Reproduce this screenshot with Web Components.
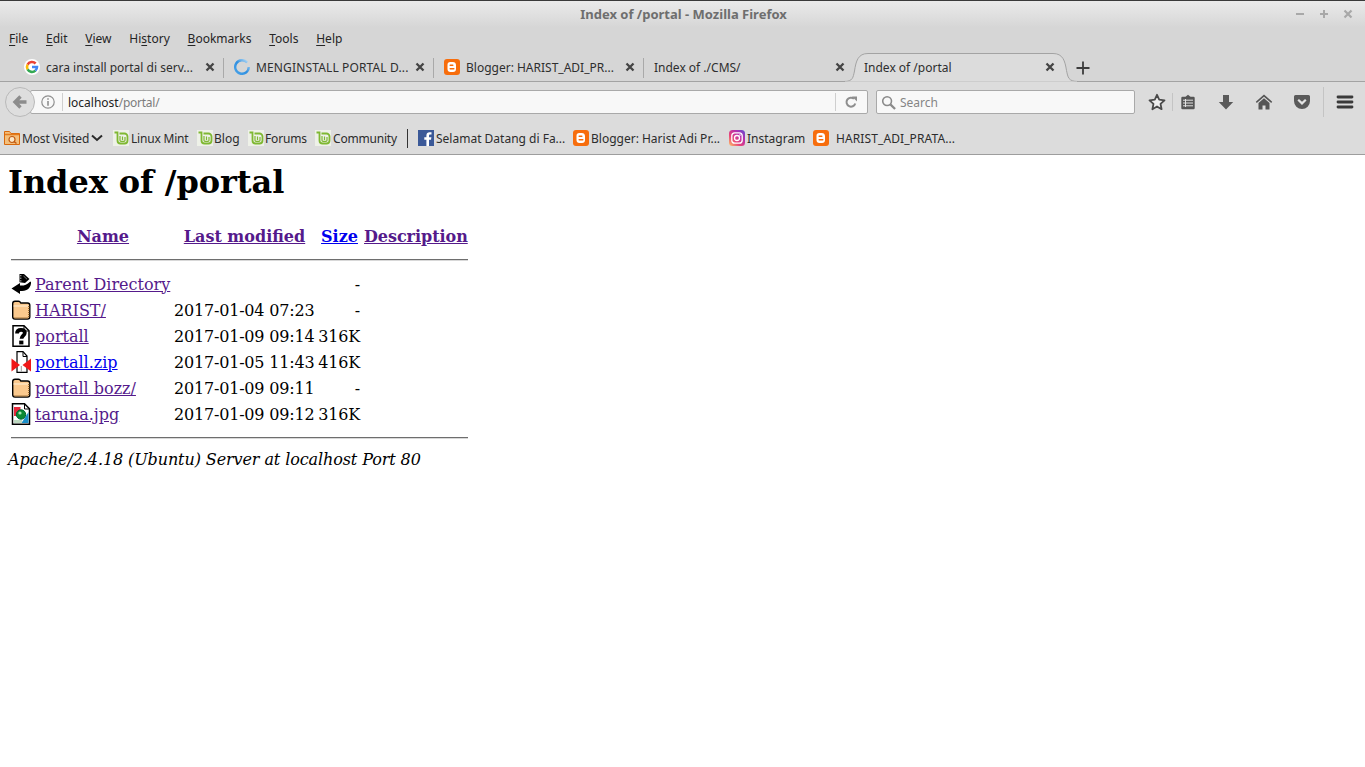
<!DOCTYPE html>
<html lang="en">
<head>
<meta charset="utf-8">
<title>Index of /portal - Mozilla Firefox</title>
<style>
html, body { margin: 0; height: 100%; overflow: hidden; background: #fff; }
</style>
</head>
<body>
<fx-window>
  <fx-titlebar slot="chrome">Index of /portal - Mozilla Firefox</fx-titlebar>
  <fx-menubar slot="chrome"></fx-menubar>
  <fx-tabstrip slot="chrome">
    <fx-tab icon="google">cara install portal di serv...</fx-tab>
    <fx-tab icon="spinner" style="letter-spacing:.14px">MENGINSTALL PORTAL D...</fx-tab>
    <fx-tab icon="blogger">Blogger: HARIST_ADI_PR...</fx-tab>
    <fx-tab>Index of ./CMS/</fx-tab>
    <fx-tab active>Index of /portal</fx-tab>
  </fx-tabstrip>
  <fx-navbar slot="chrome"></fx-navbar>
  <fx-bookmarks slot="chrome">
    <fx-bookmark icon="mostvisited" chevron style="--w:109px;--gap:2px;letter-spacing:-.15px">Most Visited</fx-bookmark>
    <fx-bookmark icon="mint" style="--w:84px;--gap:2px;letter-spacing:-.2px">Linux Mint</fx-bookmark>
    <fx-bookmark icon="mint" style="--w:51px;--gap:1px">Blog</fx-bookmark>
    <fx-bookmark icon="mint" style="--w:67px;--gap:1px;letter-spacing:-.15px">Forums</fx-bookmark>
    <fx-bookmark icon="mint" style="--w:92px;--gap:2px;letter-spacing:-.2px">Community</fx-bookmark>
    <fx-bookmark separator style="--w:11px"></fx-bookmark>
    <fx-bookmark icon="facebook" style="--w:155px;--gap:2px">Selamat Datang di Fa...</fx-bookmark>
    <fx-bookmark icon="blogger" style="--w:156px;--gap:2px">Blogger: Harist Adi Pr...</fx-bookmark>
    <fx-bookmark icon="instagram" style="--w:84px;--gap:2px">Instagram</fx-bookmark>
    <fx-bookmark icon="blogger" style="--gap:7px;letter-spacing:.1px">HARIST_ADI_PRATA...</fx-bookmark>
  </fx-bookmarks>

  <dir-listing path="/portal" footer="Apache/2.4.18 (Ubuntu) Server at localhost Port 80">
    <dir-row icon="back" name="Parent Directory" size="-" visited></dir-row>
    <dir-row icon="folder" name="HARIST/" date="2017-01-04 07:23" size="-" visited></dir-row>
    <dir-row icon="unknown" name="portall" date="2017-01-09 09:14" size="316K" visited></dir-row>
    <dir-row icon="compressed" name="portall.zip" date="2017-01-05 11:43" size="416K"></dir-row>
    <dir-row icon="folder" name="portall bozz/" date="2017-01-09 09:11" size="-" visited></dir-row>
    <dir-row icon="image" name="taruna.jpg" date="2017-01-09 09:12" size="316K" visited></dir-row>
  </dir-listing>
</fx-window>

<script>
const UI_FONT = `"Noto Sans", "Open Sans", sans-serif`;

// all the small pictures live here, keyed by name
const ICONS = {
  google: `<svg viewBox="0 0 16 16"><circle cx="8" cy="8" r="8" fill="#fff"/><g fill="none" stroke-width="2.6">
    <path d="M3.6 5.6A5 5 0 0 1 11.6 4.5" stroke="#ea4335"/><path d="M3.6 5.6A5 5 0 0 0 3.6 10.4" stroke="#fbbc05"/>
    <path d="M3.6 10.4A5 5 0 0 0 11.4 11.6" stroke="#34a853"/><path d="M11.4 11.6A5 5 0 0 0 13 8H8" stroke="#4285f4"/></g></svg>`,
  spinner: `<svg viewBox="0 0 16 16"><defs><linearGradient id="s" x1="1" y1="0" x2="0" y2="1"><stop offset="0" stop-color="#bfe0f7"/><stop offset=".5" stop-color="#2f8fe0"/><stop offset="1" stop-color="#4aa3e8"/></linearGradient></defs>
    <path d="M13.2 3.6A6.8 6.8 0 1 0 14.8 8" fill="none" stroke="url(#s)" stroke-width="2.4"/></svg>`,
  blogger: `<svg viewBox="0 0 16 16"><rect width="16" height="16" rx="3" fill="#f76d0c"/>
    <path d="M6.2 3h2.6A3.2 3.2 0 0 1 12 6v4a3 3 0 0 1-3 3H6.5a3 3 0 0 1-3-3V5.7A2.7 2.7 0 0 1 6.200 3z" fill="#fff"/>
    <path d="M6.200 6.200h2.600M6.200 9.800h3.600" stroke="#f76d0c" stroke-width="1.500" stroke-linecap="round"/></svg>`,
  mint: `<svg viewBox="0 0 16 16"><rect width="16" height="16" fill="#eef1e8"/><g fill="none" stroke="#7fb832" stroke-width="1.800">
    <path d="M1.500 2.500h3v8a3 3 0 0 0 3 3h4a3 3 0 0 0 3-3V6.500a3 3 0 0 0-3-3H6.500"/><path d="M7 6v4.300a1 1 0 0 0 1 1h3a1 1 0 0 0 1-1V7M9.500 6.500v3.500" stroke-width="1.200"/></g></svg>`,
  mostvisited: `<svg viewBox="0 0 16 16"><path d="M.5 1.500h5l1.500 2h8.500v11H.5z" fill="#f3bf7c" stroke="#d9690c"/><path d="M1 4.500h14" stroke="#e57a1a" stroke-width="1.500"/>
    <circle cx="8" cy="9.500" r="3" fill="#fbe7c8" stroke="#c25a12" stroke-width="1.200"/><path d="M10 11.500l2.500 2" stroke="#c25a12" stroke-width="1.500"/></svg>`,
  facebook: `<svg viewBox="0 0 16 16"><rect width="16" height="16" fill="#3b5998"/><path d="M11 16V9.800h2l.4-2.500H11V5.800c0-.8.300-1.200 1.200-1.200h1.300V2.300c-.3 0-1-.1-1.900-.1-1.900 0-3.200 1.100-3.200 3.300v1.800H6.300v2.500h2.100V16z" fill="#fff"/></svg>`,
  instagram: `<svg viewBox="0 0 16 16"><defs><linearGradient id="g" x1="0" y1="1" x2="1" y2="0"><stop offset="0" stop-color="#fdc468"/><stop offset=".35" stop-color="#e8447a"/><stop offset=".7" stop-color="#b22fb0"/><stop offset="1" stop-color="#5b4fd0"/></linearGradient></defs>
    <rect width="16" height="16" rx="3.500" fill="url(#g)"/><rect x="2.800" y="2.800" width="10.400" height="10.400" rx="3" fill="none" stroke="#fff" stroke-width="1.300"/>
    <circle cx="8" cy="8" r="2.500" fill="none" stroke="#fff" stroke-width="1.300"/><circle cx="11" cy="5" r=".8" fill="#fff"/></svg>`,
  close: `<svg viewBox="0 0 12 12"><path d="M2.500 2.500l7 7M9.500 2.500l-7 7" stroke="#444" stroke-width="2.300"/></svg>`,
  plus: `<svg viewBox="0 0 14 14"><path d="M7 .5v13M.5 7h13" stroke="#3c3c3c" stroke-width="1.800"/></svg>`,
  chevron: `<svg viewBox="0 0 12 8"><path d="M1 1.500l5 4.500 5-4.500" fill="none" stroke="#2a2a2a" stroke-width="2"/></svg>`,
  backarrow: `<svg viewBox="0 0 16 16"><path d="M14.500 8H4M8.500 2.500L3 8l5.500 5.500" fill="none" stroke="#8c8c8c" stroke-width="3.400"/></svg>`,
  info: `<svg viewBox="0 0 14 14"><circle cx="7" cy="7" r="6.200" fill="none" stroke="#8f8f8f" stroke-width="1.200"/><path d="M6.200 3.200h1.600v1.500H6.200zM6.200 6h1.600v4.800H6.200z" fill="#8f8f8f"/></svg>`,
  reload: `<svg viewBox="0 0 14 14"><path d="M11.300 8.500A4.500 4.500 0 1 1 10 3.800" fill="none" stroke="#8e8e8e" stroke-width="2"/><path d="M8 1.500h5V6.500z" fill="#8e8e8e"/></svg>`,
  search: `<svg viewBox="0 0 16 16"><circle cx="6.500" cy="6.500" r="4.700" fill="none" stroke="#8a8a8a" stroke-width="1.700"/><path d="M10 10l5 5" stroke="#8a8a8a" stroke-width="2.400"/></svg>`,
  star: `<svg viewBox="0 0 18 18"><path d="M9 1.800l2.200 4.900 5.300.6-4 3.600 1.100 5.300L9 13.500l-4.600 2.700 1.100-5.300-4-3.600 5.300-.6z" fill="#efefef" stroke="#4a4a4a" stroke-width="1.800" stroke-linejoin="round"/></svg>`,
  readinglist: `<svg viewBox="0 0 16 16"><path d="M2.500 2.800H5.500L8 .8l2.500 2h3a1.200 1.200 0 0 1 1.200 1.200v10a1.200 1.200 0 0 1-1.200 1.200h-11A1.200 1.200 0 0 1 1.300 14V4a1.200 1.200 0 0 1 1.200-1.200z" fill="#555"/>
    <path d="M3 6.200h10M3 9h10M3 11.800h10M5.500 5v8" stroke="#e2e2e2" stroke-width="1"/></svg>`,
  download: `<svg viewBox="0 0 16 16"><path d="M5 1h6v7h4.200L8 15.500.8 8H5z" fill="#5a5a5a"/></svg>`,
  home: `<svg viewBox="0 0 18 18"><path d="M9 1.500L.8 8.800l1 1.200L9 3.700l7.200 6.300 1-1.200z" fill="#555"/><path d="M9 5.200L3.500 10v6.500h4v-4h3v4h4V10z" fill="#555"/></svg>`,
  pocket: `<svg viewBox="0 0 18 18"><path d="M2.500 2h13A1.500 1.500 0 0 1 17 3.500V8a8 8 0 0 1-16 0V3.500A1.500 1.500 0 0 1 2.500 2z" fill="#5a5a5a"/><path d="M5.200 6.800L9 10.400l3.800-3.600" fill="none" stroke="#e4e4e4" stroke-width="2.200"/></svg>`,
  menu: `<svg viewBox="0 0 18 14"><path d="M2 2h14M2 7h14M2 12h14" stroke="#3a3a3a" stroke-width="2.800" stroke-linecap="round"/></svg>`,
  winmin: `<svg viewBox="0 0 12 12"><path d="M2 6h8" stroke="#a8a8a8" stroke-width="2"/></svg>`,
  winmax: `<svg viewBox="0 0 12 12"><path d="M6 2v8M2 6h8" stroke="#a8a8a8" stroke-width="2"/></svg>`,
  winclose: `<svg viewBox="0 0 12 12"><path d="M2.500 2.500l7 7M9.500 2.500l-7 7" stroke="#a8a8a8" stroke-width="2.200"/></svg>`,
  back: `<svg viewBox="0 0 20 22"><path d="M8.500 1h4.500l5.500 5-4.500 4-5.500-.8z" fill="#000"/><path d="M9.800 2v1.300M9.800 4.600v1.300M9.800 7.200v1.300" stroke="#ccc"/><path d="M12.500 3l3.500 3.200" stroke="#777"/>
    <path d="M.5 15.500l8.500-5.500v2.500c4 .2 7-.6 10-3.800h1v1.800c-.8 5.800-5 7.400-11 7.600V21z" fill="#000"/></svg>`,
  folder: `<svg viewBox="0 0 20 22"><path d="M1.700 6V4.500C1.700 3 2.500 2.200 4 2.200h3.500c1.200 0 1.800.8 2.300 1.800h6.700c1.500 0 2.300.8 2.300 2.300v11.500c0 1.500-.8 2.300-2.300 2.300H4c-1.500 0-2.300-.8-2.300-2.300z" fill="#fbc98d" stroke="#000" stroke-width="1.400"/>
    <path d="M2.500 7h15" stroke="#fff0d8"/><path d="M3.500 18.800h13.500M17.800 7v11" fill="none" stroke="#8a5a20" stroke-width="1.200" stroke-dasharray="1 1"/></svg>`,
  unknown: `<svg viewBox="0 0 20 22"><path d="M2 .8h11l5 5v15.400H2z" fill="#fff" stroke="#000" stroke-width="1.500"/><path d="M13 1v5h5" fill="none" stroke="#000"/>
    <path d="M6 8.500C6 6 7.500 4.800 10 4.800c2.500 0 3.800 1.300 3.800 3 0 2.800-3.300 3-3.300 6" fill="none" stroke="#000" stroke-width="3.800"/><path d="M8.200 15.600h4.200v3.800H8.200z" fill="#000"/></svg>`,
  compressed: `<svg viewBox="0 0 20 22"><path d="M6 .7h6l4 4.300v16.300H6z" fill="#fff" stroke="#000" stroke-width="1.200"/><path d="M12 1v4.500h4" fill="none" stroke="#000"/>
    <path d="M10.300 15v5.500" stroke="#999" stroke-width="1"/><path d="M.5 7.500v13L9 14z" fill="#f01818"/><path d="M20 7.500v13L11.500 14z" fill="#f01818"/></svg>`,
  image: `<svg viewBox="0 0 20 22"><path d="M1.500 .8h12l5 5v15.400h-17z" fill="#fff" stroke="#000" stroke-width="1.500"/><path d="M13.500 1v5h5" fill="none" stroke="#000"/>
    <path d="M3 4h6.500v4.500L5.500 13H3z" fill="#e8283c"/><path d="M17.500 9v11h-7z" fill="#1a8fc8"/><path d="M3 17h8v3H3z" fill="#bcd8c0"/>
    <circle cx="10" cy="11.500" r="4.700" fill="#0c8a34" stroke="#063"/><circle cx="9" cy="10" r="1.600" fill="#a6e8b6"/></svg>`
};

class FxIcon extends HTMLElement {
  static observedAttributes = ['name'];
  constructor() {
    super();
    this.attachShadow({ mode: 'open' });
  }
  attributeChangedCallback() {
    const size = this.getAttribute('size') || 16;
    const h = this.getAttribute('height') || size;
    this.shadowRoot.innerHTML = `<style>
      :host { display: inline-block; flex: none; width: ${size}px; height: ${h}px; line-height: 0; }
      svg { width: 100%; height: 100%; display: block; }
    </style>${ICONS[this.getAttribute('name')] || ''}`;
  }
}
customElements.define('fx-icon', FxIcon);

class FxWindow extends HTMLElement {
  constructor() {
    super();
    this.attachShadow({ mode: 'open' }).innerHTML = `<style>
      :host { display: flex; flex-direction: column; height: 100vh; }
      header { flex: none; }
      main { flex: 1; background: #fff; }
    </style><header><slot name="chrome"></slot></header><main><slot></slot></main>`;
  }
}
customElements.define('fx-window', FxWindow);

class FxTitlebar extends HTMLElement {
  constructor() {
    super();
    this.attachShadow({ mode: 'open' }).innerHTML = `<style>
      :host { display: grid; grid-template-columns: 1fr auto 1fr; align-items: center; height: 26px;
        border-top: 1px solid #3a3a3a; background: linear-gradient(#eaeaea, #d8d8d8 24px, #d6d6d6);
        font: bold 13px ${UI_FONT}; color: #6e6e6e; }
      .controls { grid-column: 3; justify-self: end; display: flex; gap: 12px; padding-right: 11px; }
      .title { grid-column: 2; padding-left: 2px; }
    </style><div class="title"><slot></slot></div>
    <div class="controls">
      <fx-icon name="winmin" size="12"></fx-icon><fx-icon name="winmax" size="12"></fx-icon><fx-icon name="winclose" size="12"></fx-icon>
    </div>`;
  }
}
customElements.define('fx-titlebar', FxTitlebar);

class FxMenubar extends HTMLElement {
  constructor() {
    super();
    const items = [['F','ile'],['E','dit'],['V','iew'],['Hi','s','tory'],['B','ookmarks'],['T','ools'],['H','elp']];
    const html = items.map(p => p.length === 2
      ? `<span><u>${p[0]}</u>${p[1]}</span>`
      : `<span>${p[0]}<u>${p[1]}</u>${p[2]}</span>`).join('');
    this.attachShadow({ mode: 'open' }).innerHTML = `<style>
      :host { display: flex; align-items: center; gap: 17.8px; height: 23px; padding: 0 0 3px 9px; background: #d6d6d6;
        font: 12px ${UI_FONT}; color: #252525; }
      u { text-underline-offset: 2px; }
    </style>${html}`;
  }
}
customElements.define('fx-menubar', FxMenubar);

class FxTabstrip extends HTMLElement {
  constructor() {
    super();
    this.attachShadow({ mode: 'open' }).innerHTML = `<style>
      :host { display: flex; align-items: stretch; height: 28px; padding-left: 14px; background: #d6d6d6;
        border-bottom: 1px solid #a3a3a3; box-sizing: content-box; }
      .add { display: flex; align-items: center; margin-left: 12px; padding-top: 2px; }
    </style><slot></slot><div class="add"><fx-icon name="plus" size="14"></fx-icon></div>`;
  }
}
customElements.define('fx-tabstrip', FxTabstrip);

class FxTab extends HTMLElement {
  constructor() {
    super();
    const icon = this.getAttribute('icon');
    const active = this.hasAttribute('active');
    this.attachShadow({ mode: 'open' }).innerHTML = `<style>
      :host { position: relative; display: flex; align-items: center; gap: 6px; width: 210px; box-sizing: border-box;
        padding: 0 8px 0 10px; font: 12px ${UI_FONT}; color: #2e2e2e; white-space: nowrap; }
      :host(:not([active])) { background: linear-gradient(#a9a9a9, #a9a9a9) right 5px / 1px 20px no-repeat; }
      :host(:nth-of-type(4)) { background: none; }
      .label { flex: 1; overflow: hidden; position: relative; }
      .shape { position: absolute; left: -10px; top: 0; width: 234px; height: 29px; }
      fx-icon { position: relative; }
    </style>
    ${active ? `<svg class="shape" viewBox="0 0 234 29"><path d="M0 28.500c9 0 9-4 10.500-10.500C12 8 14 .5 24 .5h185c10 0 12 7.500 13.500 17 1.500 6.500 1.500 11 11.500 11" fill="#dcdcdc" stroke="#a3a3a3"/><path d="M1 28.500h232v1H1z" fill="#dcdcdc"/></svg>` : ''}
    ${icon ? `<fx-icon name="${icon}"></fx-icon>` : ''}
    <span class="label"><slot></slot></span>
    <fx-icon name="close" size="12"></fx-icon>`;
  }
}
customElements.define('fx-tab', FxTab);

class FxNavbar extends HTMLElement {
  constructor() {
    super();
    this.attachShadow({ mode: 'open' }).innerHTML = `<style>
      :host { position: relative; display: flex; align-items: center; height: 40px; box-sizing: border-box; padding: 0 0 0 5px; background: #dcdcdc;
        font: 12px ${UI_FONT}; }
      .back { position: relative; z-index: 1; flex: none; width: 30px; height: 30px; box-sizing: border-box; border-radius: 50%;
        border: 1px solid #b9b9b9; background: #dedede; display: flex; align-items: center; justify-content: center; margin-right: -5px; }
      .url, .find { height: 24px; box-sizing: border-box; border: 1px solid #a9a9a9; border-radius: 2px; background: #f8f8f8;
        display: flex; align-items: center; }
      .url { width: 838px; padding: 0 9px 0 10px; }
      .url .sep { width: 1px; height: 18px; background: #cfcfcf; flex: none; }
      .host { color: #222; } .rest { color: #7c7c7c; letter-spacing: -0.25px; }
      .addr { flex: 1; padding-left: 5px; }
      .find { width: 259px; margin-left: 8px; padding-left: 4px; gap: 4px; color: #858585; }
      .tools { display: flex; align-items: center; margin-left: 13px; }
      .tools .sep { width: 1px; background: #c4c4c4; flex: none; }
    </style>
    <div class="back"><fx-icon name="backarrow" size="16"></fx-icon></div>
    <div class="url">
      <fx-icon name="info" size="14"></fx-icon>
      <span class="sep" style="margin-left:7px"></span>
      <span class="addr"><span class="host">localhost</span><span class="rest">/portal/</span></span>
      <span class="sep" style="margin-right:8px"></span>
      <fx-icon name="reload" size="14"></fx-icon>
    </div>
    <div class="find"><fx-icon name="search" size="15"></fx-icon>Search</div>
    <div class="tools">
      <fx-icon name="star" size="18"></fx-icon>
      <span class="sep" style="height:18px;margin:0 7px 0 6px"></span>
      <fx-icon name="readinglist" size="16"></fx-icon>
      <fx-icon name="download" size="16" style="margin-left:22px"></fx-icon>
      <fx-icon name="home" size="18" style="margin-left:21px"></fx-icon>
      <fx-icon name="pocket" size="18" style="margin-left:20px"></fx-icon>
      <span class="sep" style="height:30px;margin:0 12px 0 12px"></span>
      <fx-icon name="menu" size="18" height="14"></fx-icon>
    </div>`;
  }
}
customElements.define('fx-navbar', FxNavbar);

class FxBookmarks extends HTMLElement {
  constructor() {
    super();
    this.attachShadow({ mode: 'open' }).innerHTML = `<style>
      :host { display: flex; align-items: center; height: 33px; box-sizing: border-box; padding-left: 4px; background: #dcdcdc;
        border-bottom: 1px solid #9d9d9d; font: 12px ${UI_FONT}; color: #2c2c2c; }
    </style><slot></slot>`;
  }
}
customElements.define('fx-bookmarks', FxBookmarks);

class FxBookmark extends HTMLElement {
  constructor() {
    super();
    const root = this.attachShadow({ mode: 'open' });
    const base = `:host { display: flex; align-items: center; flex: none; width: var(--w, auto); white-space: nowrap; gap: var(--gap, 3px); }`;
    if (this.hasAttribute('separator')) {
      root.innerHTML = `<style>${base} i { width: 1px; height: 19px; background: #333; }</style><i></i>`;
      return;
    }
    root.innerHTML = `<style>${base}</style><fx-icon name="${this.getAttribute('icon')}"></fx-icon><slot></slot>
      ${this.hasAttribute('chevron') ? '<fx-icon name="chevron" size="12" height="8"></fx-icon>' : ''}`;
  }
}
customElements.define('fx-bookmark', FxBookmark);

class DirListing extends HTMLElement {
  constructor() {
    super();
    const header = ['Name', 'Last modified', 'Size', 'Description'];
    this.attachShadow({ mode: 'open' }).innerHTML = `<style>
      :host { display: block; padding: 9px 8px 0; font: 16px "DejaVu Serif", serif; color: #000;
        --cols: 20px 135px 140px 42px 103px; }
      h1 { font-size: 32px; line-height: 37px; margin: 0 0 23px; letter-spacing: -0.07px; }
      .table { margin-left: 3px; width: 457px; }
      .head { display: grid; grid-template-columns: var(--cols); column-gap: 4px; height: 24px; align-items: center;
        font-weight: bold; text-align: center; }
      .head span:not(:last-child) { padding-left: 1px; }
      .head span:last-child { letter-spacing: -0.05px; }
      a { color: #551a8b; text-decoration: underline; }
      a.new { color: #00e; }
      hr { margin: 0; border: 0; height: 1px; background: #6e6e6e; box-shadow: 0 1px 0 #d8d8d8; }
      address { margin-top: 12px; letter-spacing: -0.1px; }
    </style>
    <h1>Index of ${this.getAttribute('path')}</h1>
    <div class="table">
      <div class="head"><span></span>${header.map(h => `<span><a class="${h === 'Size' ? 'new' : ''}">${h}</a></span>`).join('')}</div>
      <hr style="margin:11px 0 11px">
      <slot></slot>
      <hr style="margin-top:10px">
    </div>
    <address>${this.getAttribute('footer')}</address>`;
  }
}
customElements.define('dir-listing', DirListing);

class DirRow extends HTMLElement {
  constructor() {
    super();
    const a = n => this.getAttribute(n) || '';
    this.attachShadow({ mode: 'open' }).innerHTML = `<style>
      :host { display: grid; grid-template-columns: var(--cols); column-gap: 4px; height: 26px; align-items: center; white-space: nowrap; }
      a { color: ${this.hasAttribute('visited') ? '#551a8b' : '#00e'}; text-decoration: underline; }
      .date { letter-spacing: -0.19px; }
      .size { text-align: right; letter-spacing: -0.2px; }
    </style>
    <fx-icon name="${a('icon')}" size="20" height="22"></fx-icon>
    <span><a>${a('name')}</a></span><span class="date">${a('date')}</span><span class="size">${a('size')}</span><span></span>`;
  }
}
customElements.define('dir-row', DirRow);
</script>
</body>
</html>
